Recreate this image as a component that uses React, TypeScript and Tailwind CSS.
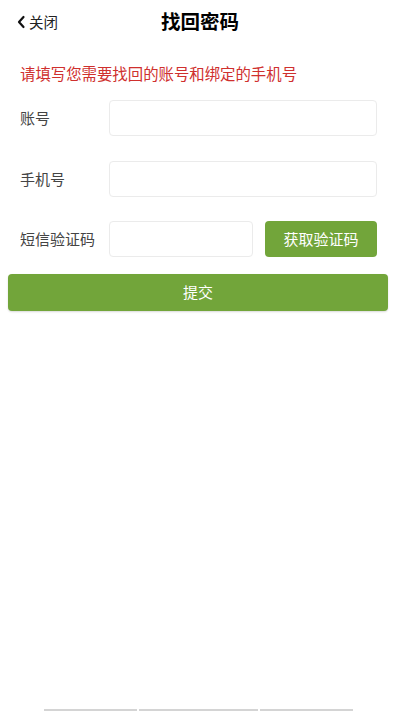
import React from "react";

const font = { fontFamily: '"Noto Sans CJK SC", "Noto Sans", sans-serif' };

export default function App() {
  return (
    <div className="w-[400px] h-[711px] bg-white flex flex-col" style={font}>
      <div className="h-[44px] grid grid-cols-[1fr_auto_1fr] items-center">
        <div className="flex items-center pl-[16px] text-[14.5px] text-[#222]">
          <svg width="10" height="14" viewBox="0 0 10 14" className="mr-[3px]">
            <path d="M7.5 2 L3 7 L7.5 12" fill="none" stroke="#111" strokeWidth="2.2" strokeLinecap="round" strokeLinejoin="round" />
          </svg>
          <span>关闭</span>
        </div>
        <div className="text-[19.5px] font-bold text-black leading-none pb-[2px]">找回密码</div>
        <div />
      </div>

      <div className="mt-[19px] pl-[20px] text-[15.4px] leading-[20px] text-[#cf302e]">
        请填写您需要找回的账号和绑定的手机号
      </div>

      <div className="mt-[17px] flex items-center pl-[20px] pr-[23px]">
        <div className="w-[89px] text-[15px] text-[#444]">账号</div>
        <div className="flex-1 h-[36px] rounded-[4px] border border-[#ebebeb]" />
      </div>

      <div className="mt-[25px] flex items-center pl-[20px] pr-[23px]">
        <div className="w-[89px] text-[15px] text-[#444]">手机号</div>
        <div className="flex-1 h-[36px] rounded-[4px] border border-[#ebebeb]" />
      </div>

      <div className="mt-[24px] flex items-center pl-[20px] pr-[23px]">
        <div className="w-[89px] text-[15px] text-[#444]">短信验证码</div>
        <div className="w-[144px] h-[36px] rounded-[4px] border border-[#ebebeb]" />
        <div className="ml-[12px] flex-1 h-[36px] rounded-[4px] bg-[#72a53a] flex items-center justify-center text-[15px] text-white">
          获取验证码
        </div>
      </div>

      <div className="mt-[17px] mx-[8px] w-[380px] h-[37px] rounded-[4px] bg-[#72a53a] flex items-center justify-center text-[15px] text-white shadow-[0_1px_2px_rgba(0,0,0,0.15)]">
        提交
      </div>

      <div className="flex-1" />
      <div className="flex h-[2px] pl-[44px] gap-[2px]">
        <div className="w-[93px] bg-[#d4d4d4]" />
        <div className="w-[119px] bg-[#d4d4d4]" />
        <div className="w-[93px] bg-[#d4d4d4]" />
      </div>
    </div>
  );
}
